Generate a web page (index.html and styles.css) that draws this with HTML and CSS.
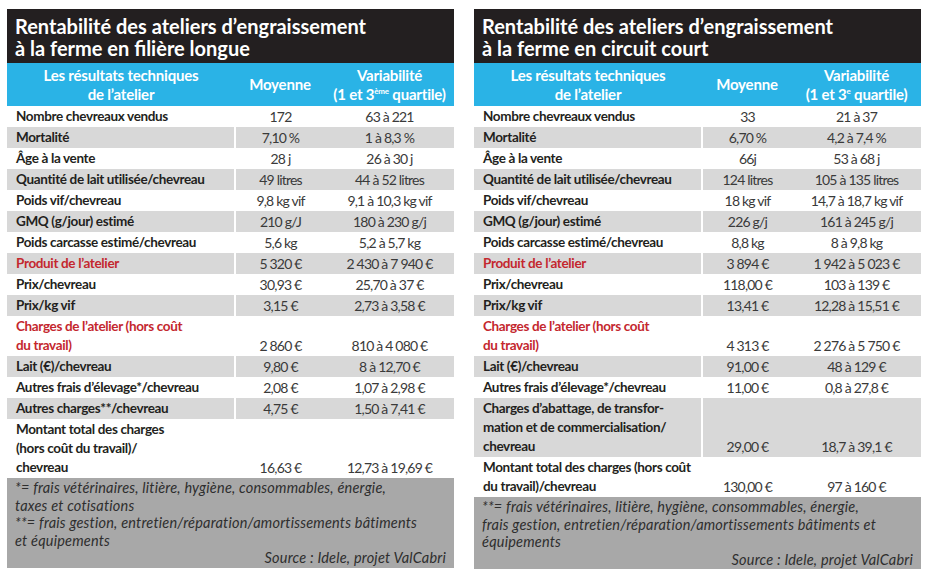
FILE: index.html
```html
<html lang="fr">
  <head>
    <meta charset="UTF-8" />
    <meta name="viewport" content="width=device-width, initial-scale=1.0" />
    <title>Rentabilité des ateliers d'engraissement</title>
    <link rel="stylesheet" href="styles.css">
  </head>
  <body>
    <div class="page">
      <!-- filière longue -->
      <div class="panel">
        <div class="title">Rentabilité des ateliers d’engraissement<br />à la ferme en filière longue</div>
        <table>
          <colgroup>
            <col class="c-label" />
            <col class="c-avg" />
            <col class="c-var" />
          </colgroup>
          <thead>
            <tr>
              <th>Les résultats techniques<br />de l’atelier</th>
              <th>Moyenne</th>
              <th>Variabilité<br />(1 et 3<sup>ème</sup> quartile)</th>
            </tr>
          </thead>
          <tbody>
            <tr><td>Nombre chevreaux vendus</td><td>172</td><td>63 à 221</td></tr>
            <tr class="alt"><td>Mortalité</td><td>7,10 %</td><td>1 à 8,3 %</td></tr>
            <tr><td>Âge à la vente</td><td>28 j</td><td>26 à 30 j</td></tr>
            <tr class="alt"><td>Quantité de lait utilisée/chevreau</td><td>49 litres</td><td>44 à 52 litres</td></tr>
            <tr><td>Poids vif/chevreau</td><td>9,8 kg vif</td><td>9,1 à 10,3 kg vif</td></tr>
            <tr class="alt"><td>GMQ (g/jour) estimé</td><td>210 g/J</td><td>180 à 230 g/j</td></tr>
            <tr><td>Poids carcasse estimé/chevreau</td><td>5,6 kg</td><td>5,2 à 5,7 kg</td></tr>
            <tr class="alt red"><td>Produit de l’atelier</td><td>5 320 €</td><td>2 430 à 7 940 €</td></tr>
            <tr><td>Prix/chevreau</td><td>30,93 €</td><td>25,70 à 37 €</td></tr>
            <tr class="alt"><td>Prix/kg vif</td><td>3,15 €</td><td>2,73 à 3,58 €</td></tr>
            <tr class="red"><td>Charges de l’atelier (hors coût<br />du travail)</td><td>2 860 €</td><td>810 à 4 080 €</td></tr>
            <tr class="alt"><td>Lait (€)/chevreau</td><td>9,80 €</td><td>8 à 12,70 €</td></tr>
            <tr><td>Autres frais d’élevage*/chevreau</td><td>2,08 €</td><td>1,07 à 2,98 €</td></tr>
            <tr class="alt"><td>Autres charges**/chevreau</td><td>4,75 €</td><td>1,50 à 7,41 €</td></tr>
            <tr><td>Montant total des charges<br />(hors coût du travail)/<br />chevreau</td><td>16,63 €</td><td>12,73 à 19,69 €</td></tr>
          </tbody>
          <tfoot>
            <tr>
              <td colspan="3">
                *= frais vétérinaires, litière, hygiène, consommables, énergie,<br />
                taxes et cotisations<br />
                **= frais gestion, entretien/réparation/amortissements bâtiments<br />
                et équipements
                <div class="source">Source : Idele, projet ValCabri</div>
              </td>
            </tr>
          </tfoot>
        </table>
      </div>

      <!-- circuit court -->
      <div class="panel">
        <div class="title">Rentabilité des ateliers d’engraissement<br />à la ferme en circuit court</div>
        <table>
          <colgroup>
            <col class="c-label" />
            <col class="c-avg" />
            <col class="c-var" />
          </colgroup>
          <thead>
            <tr>
              <th>Les résultats techniques<br />de l’atelier</th>
              <th>Moyenne</th>
              <th>Variabilité<br />(1 et 3<sup>e</sup> quartile)</th>
            </tr>
          </thead>
          <tbody>
            <tr><td>Nombre chevreaux vendus</td><td>33</td><td>21 à 37</td></tr>
            <tr class="alt"><td>Mortalité</td><td>6,70 %</td><td>4,2 à 7,4 %</td></tr>
            <tr><td>Âge à la vente</td><td>66j</td><td>53 à 68 j</td></tr>
            <tr class="alt"><td>Quantité de lait utilisée/chevreau</td><td>124 litres</td><td>105 à 135 litres</td></tr>
            <tr><td>Poids vif/chevreau</td><td>18 kg vif</td><td>14,7 à 18,7 kg vif</td></tr>
            <tr class="alt"><td>GMQ (g/jour) estimé</td><td>226 g/j</td><td>161 à 245 g/j</td></tr>
            <tr><td>Poids carcasse estimé/chevreau</td><td>8,8 kg</td><td>8 à 9,8 kg</td></tr>
            <tr class="alt red"><td>Produit de l’atelier</td><td>3 894 €</td><td>1 942 à 5 023 €</td></tr>
            <tr><td>Prix/chevreau</td><td>118,00 €</td><td>103 à 139 €</td></tr>
            <tr class="alt"><td>Prix/kg vif</td><td>13,41 €</td><td>12,28 à 15,51 €</td></tr>
            <tr class="red"><td>Charges de l’atelier (hors coût<br />du travail)</td><td>4 313 €</td><td>2 276 à 5 750 €</td></tr>
            <tr class="alt"><td>Lait (€)/chevreau</td><td>91,00 €</td><td>48 à 129 €</td></tr>
            <tr><td>Autres frais d’élevage*/chevreau</td><td>11,00 €</td><td>0,8 à 27,8 €</td></tr>
            <tr class="alt"><td>Charges d’abattage, de transfor-<br />mation et de commercialisation/<br />chevreau</td><td>29,00 €</td><td>18,7 à 39,1 €</td></tr>
            <tr><td>Montant total des charges (hors coût<br />du travail)/chevreau</td><td>130,00 €</td><td>97 à 160 €</td></tr>
          </tbody>
          <tfoot>
            <tr>
              <td colspan="3">
                **= frais vétérinaires, litière, hygiène, consommables, énergie,<br />
                frais gestion, entretien/réparation/amortissements bâtiments et<br />
                équipements
                <div class="source">Source : Idele, projet ValCabri</div>
              </td>
            </tr>
          </tfoot>
        </table>
      </div>
    </div>
  </body>
</html>
```

FILE: styles.css
```css
* {
  margin: 0;
  padding: 0;
}
body {
  background: #fff;
  font-family: Lato, "Open Sans", sans-serif;
  color: #231f20;
}
.page {
  display: flex;
  gap: 20px;
  padding: 9px 0 0 7px;
}
.panel {
  width: 447px;
}

/* black title */
.title {
  background: #231f20;
  color: #fff;
  font-weight: bold;
  font-size: 20px;
  line-height: 22px;
  height: 44px;
  padding: 6px 8px 4px;
}

table {
  width: 100%;
  border-collapse: collapse;
  table-layout: fixed;
}
.c-label {
  width: 228px;
}
.c-avg {
  width: 90px;
}
.c-var {
  width: 129px;
}

/* blue header */
thead th {
  background: #2ab3e6;
  color: #fff;
  font-size: 15px;
  font-weight: bold;
  letter-spacing: -0.2px;
  line-height: 19px;
  height: 43px;
  padding: 0;
  text-align: center;
}
thead sup {
  font-size: 8px;
  vertical-align: 6px;
  line-height: 0;
}

/* body rows */
tbody td {
  font-size: 14px;
  line-height: 19px;
  padding: 1px 0 1px 0;
  text-align: center;
  vertical-align: bottom;
  color: #3a3a3a;
  letter-spacing: -0.8px;
  white-space: nowrap;
}
tbody td:first-child {
  text-align: left;
  padding-left: 9px;
  font-weight: bold;
  font-size: 13.5px;
  letter-spacing: -0.35px;
  color: #231f20;
  vertical-align: top;
  border-right: 2px solid #fff;
}
tbody tr.alt td {
  background: #d8d8d8;
}
tbody tr.red td:first-child {
  color: #c4272e;
}

/* notes */
tfoot td {
  background: #a8a8a8;
  color: #2e2e2e;
  font-style: italic;
  font-size: 14.5px;
  letter-spacing: 0.2px;
  line-height: 17.5px;
  padding: 1px 8px 1px 8px;
  white-space: nowrap;
}
.source {
  text-align: right;
}
```
